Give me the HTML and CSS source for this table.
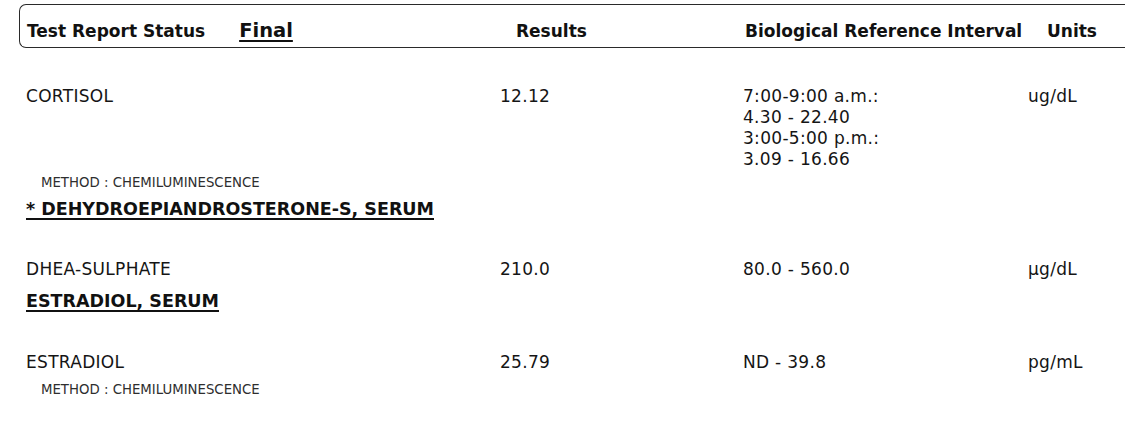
FILE: index.html
```html
<!DOCTYPE html>
<html>
<head>
<meta charset="utf-8">
<link rel="stylesheet" href="styles.css">
</head>
<body>
<div class="header">
  <div class="h-status"><span class="h-label">Test Report Status</span><span class="h-final">Final</span></div>
  <div class="h-col">Results</div>
  <div class="h-col">Biological Reference Interval</div>
  <div class="h-col">Units</div>
</div>
<div class="report">
  <div class="test-row first">
    <div class="t-name">CORTISOL</div>
    <div class="t-result">12.12</div>
    <div class="t-range">7:00-9:00 a.m.:<br>4.30 - 22.40<br>3:00-5:00 p.m.:<br>3.09 - 16.66</div>
    <div class="t-unit">ug/dL</div>
  </div>
  <div class="method tight">METHOD : CHEMILUMINESCENCE</div>
  <div class="group-title">* DEHYDROEPIANDROSTERONE-S, SERUM</div>
  <div class="test-row after-title">
    <div class="t-name">DHEA-SULPHATE</div>
    <div class="t-result">210.0</div>
    <div class="t-range">80.0 - 560.0</div>
    <div class="t-unit">µg/dL</div>
  </div>
  <div class="group-title lower">ESTRADIOL, SERUM</div>
  <div class="test-row">
    <div class="t-name">ESTRADIOL</div>
    <div class="t-result">25.79</div>
    <div class="t-range">ND - 39.8</div>
    <div class="t-unit">pg/mL</div>
  </div>
  <div class="method">METHOD : CHEMILUMINESCENCE</div>
</div>
</body>
</html>
```

FILE: styles.css
```css
html, body {
  margin: 0;
  padding: 0;
  background: #ffffff;
}
body {
  font-family: "DejaVu Sans", Verdana, sans-serif;
  font-size: 17px;
  color: #151515;
  overflow: hidden;
}
.header {
  margin: 4px 0 0 19px;
  height: 44px;
  box-sizing: border-box;
  border: 1.5px solid #2a2a2a;
  border-right: none;
  border-radius: 7px 0 0 7px;
  padding: 15px 0 0 7px;
  display: grid;
  grid-template-columns: 489px 229px 302px auto;
  align-items: baseline;
  font-weight: bold;
  line-height: 21px;
  color: #111;
}
.h-status {
  display: flex;
  align-items: baseline;
  gap: 34px;
}
.h-final {
  font-size: 19.5px;
  text-decoration: underline;
  text-decoration-thickness: 2px;
  text-underline-offset: 3px;
}
.report {
  padding-left: 26px;
}
.test-row {
  display: grid;
  grid-template-columns: 474px 243px 285px auto;
  line-height: 21px;
  letter-spacing: 0.3px;
  margin-top: 40px;
}
.test-row.first {
  margin-top: 38px;
}
.test-row.after-title {
  margin-top: 39px;
}
.method {
  font-size: 13.3px;
  line-height: 15px;
  padding-left: 15px;
  color: #2e2e2e;
  margin-top: 9px;
}
.method.tight {
  margin-top: 5px;
}
.group-title {
  margin-top: 9px;
  font-size: 17.5px;
  font-weight: bold;
  line-height: 21px;
  text-decoration: underline;
  text-decoration-thickness: 2px;
  text-underline-offset: 3px;
  color: #111;
}
.group-title.lower {
  margin-top: 11px;
}
```
